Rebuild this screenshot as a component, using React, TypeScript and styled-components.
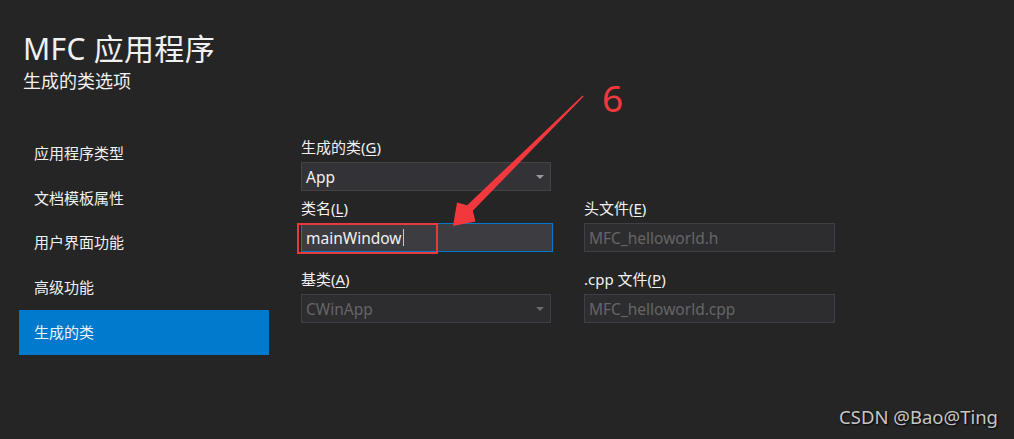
import React from 'react'
import styled, { createGlobalStyle } from 'styled-components'

const GlobalStyle = createGlobalStyle`
	html, body {
		margin: 0;
		padding: 0;
		background: #252526;
	}
	body {
		font-family: 'Noto Sans', 'Noto Sans CJK SC', sans-serif;
		color: #f1f1f1;
	}
`

const Page = styled.div`
	position: relative;
	width: 1014px;
	height: 439px;
	overflow: hidden;
	background: #252526;
`

const Header = styled.div`
	padding: 28px 0 0 23px;
`

const Title = styled.div`
	font-size: 30px;
	line-height: 41px;
	color: #f1f1f1;
	letter-spacing: 0.3px;
`

const SubTitle = styled.div`
	font-size: 18px;
	line-height: 24px;
	color: #f1f1f1;
`

const Body = styled.div`
	display: flex;
	margin-top: 38px;
`

const SideNav = styled.ul`
	list-style: none;
	margin: 0 0 0 19px;
	padding: 0;
	width: 250px;
`

const NavItem = styled.li<{ $active?: boolean }>`
	box-sizing: border-box;
	height: 44.75px;
	display: flex;
	align-items: center;
	padding: 0 0 2px 15px;
	font-size: 15px;
	color: #f1f1f1;
	background: ${(p) => (p.$active ? '#007acc' : 'transparent')};
`

const Form = styled.div`
	display: grid;
	grid-template-columns: 250px 251px;
	column-gap: 33px;
	margin-left: 32px;
	margin-top: 6px;
	align-content: start;
`

const Field = styled.div<{ $top: number }>`
	position: relative;
	margin-top: ${(p) => p.$top}px;
`

const Label = styled.div`
	font-size: 15px;
	line-height: 20px;
	height: 20px;
	margin-bottom: 5px;
	color: #f1f1f1;
	u {
		text-decoration: underline;
		text-underline-offset: 2px;
	}
`

const Box = styled.div<{ $kind: 'combo' | 'input' | 'disabled' }>`
	position: relative;
	box-sizing: border-box;
	height: 29px;
	display: flex;
	align-items: center;
	padding-left: 4px;
	font-size: 15.5px;
	border: 1px solid
		${(p) =>
			p.$kind === 'input'
				? '#007acc'
				: p.$kind === 'combo'
				? '#434346'
				: '#3f3f46'};
	background: ${(p) =>
		p.$kind === 'input'
			? '#3c3c41'
			: p.$kind === 'combo'
			? '#333337'
			: '#2d2d30'};
	color: ${(p) => (p.$kind === 'disabled' ? '#656565' : '#f1f1f1')};
`

const Caret = styled.span`
	display: inline-block;
	width: 1px;
	height: 17px;
	margin-left: 1px;
	background: #c8c8c8;
`

const DropArrow = styled.span<{ $dim?: boolean }>`
	position: absolute;
	right: 6px;
	top: 12px;
	width: 0;
	height: 0;
	border-left: 4px solid transparent;
	border-right: 4px solid transparent;
	border-top: 4px solid ${(p) => (p.$dim ? '#6a6a6a' : '#999999')};
`

const Highlight = styled.div`
	position: absolute;
	left: -4px;
	bottom: -2px;
	width: 141px;
	height: 31px;
	box-sizing: border-box;
	border: 2px solid #e8393c;
	pointer-events: none;
`

const Annotation = styled.svg`
	position: absolute;
	left: 0;
	top: 0;
	pointer-events: none;
`

const StepNumber = styled.div`
	position: absolute;
	left: 602px;
	top: 74px;
	font-size: 37px;
	line-height: 48px;
	color: #f2383c;
	font-family: 'Noto Sans', sans-serif;
`

const Watermark = styled.div`
	position: absolute;
	right: 16px;
	bottom: 10px;
	font-size: 18.5px;
	color: #c6c6c6;
	text-shadow: 1px 1px 2px #000;
	font-family: 'Noto Sans', sans-serif;
`

const navItems = ['应用程序类型', '文档模板属性', '用户界面功能', '高级功能', '生成的类']

export default function App() {
	return (
		<Page>
			<GlobalStyle />
			<Header>
				<Title>MFC 应用程序</Title>
				<SubTitle>生成的类选项</SubTitle>
			</Header>
			<Body>
				<SideNav>
					{navItems.map((item, i) => (
						<NavItem key={i} $active={i === navItems.length - 1}>
							{item}
						</NavItem>
					))}
				</SideNav>
				<Form>
					<Field $top={0}>
						<Label>
							生成的类(<u>G</u>)
						</Label>
						<Box $kind="combo">
							App
							<DropArrow />
						</Box>
					</Field>
					<div />
					<Field $top={7}>
						<Label>
							类名(<u>L</u>)
						</Label>
						<Box $kind="input" style={{ width: 252 }}>
							mainWindow
							<Caret />
						</Box>
						<Highlight />
					</Field>
					<Field $top={7}>
						<Label>
							头文件(<u>E</u>)
						</Label>
						<Box $kind="disabled">MFC_helloworld.h</Box>
					</Field>
					<Field $top={17}>
						<Label>
							基类(<u>A</u>)
						</Label>
						<Box $kind="disabled">
							CWinApp
							<DropArrow $dim />
						</Box>
					</Field>
					<Field $top={17}>
						<Label>
							.cpp 文件(<u>P</u>)
						</Label>
						<Box $kind="disabled">MFC_helloworld.cpp</Box>
					</Field>
				</Form>
			</Body>
			<Annotation width="1014" height="439" viewBox="0 0 1014 439">
				<polygon
					points="582.6,95.4 583.6,96.4 472.8,210.8 475.5,221.5 453,226 457,202.5 467.2,205.2"
					fill="#f2383c"
				/>
			</Annotation>
			<StepNumber>6</StepNumber>
			<Watermark>CSDN @Bao@Ting</Watermark>
		</Page>
	)
}
